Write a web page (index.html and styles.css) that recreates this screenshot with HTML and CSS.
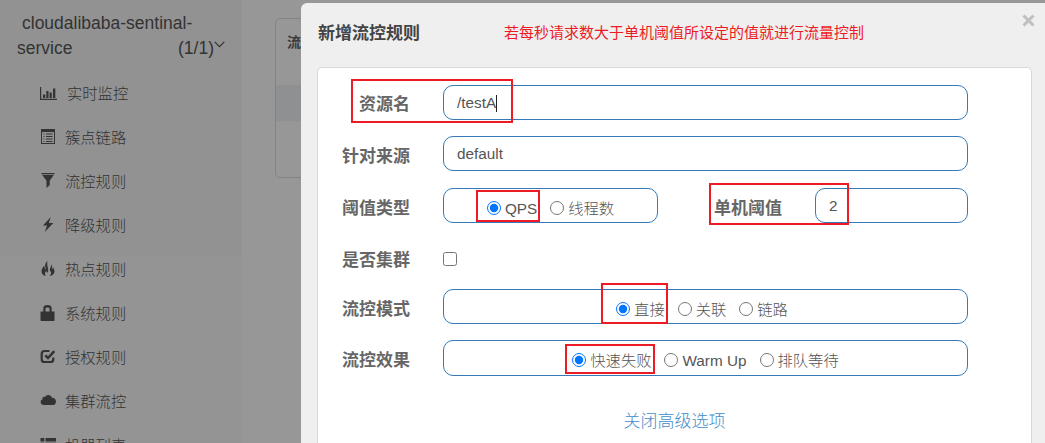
FILE: index.html
```html
<!DOCTYPE html>
<html lang="zh-CN">
<head>
<meta charset="utf-8">
<title>新增流控规则</title>
<link rel="stylesheet" href="styles.css">
</head>
<body>
<div class="page">
  <nav class="sidebar">
    <div class="app">
      <div class="app-name">cloudalibaba-sentinal-</div>
      <div class="app-row"><span>service</span><span class="count">(1/1)<svg class="chevron" width="11" height="7" viewBox="0 0 11 7"><path d="M.7.8 5.5 5.6 10.3.8" fill="none" stroke="currentColor" stroke-width="1.2"/></svg></span></div>
    </div>
    <ul class="menu">
      <li class="wide"><svg viewBox="0 0 18 16"><path d="M0 2h1.200v11.800H17V15H0zM3 9.500h2.200V13H3zM6.300 6h2.200v7H6.300zM9.600 7.500h2.200V13H9.600zM13 3.500h2.300V13H13z"/></svg><span>实时监控</span></li>
      <li><svg viewBox="0 0 16 16"><path fill-rule="evenodd" d="M1 0h14v15H1zM2 3v11h12V3zM3.500 4.500h1v1h-1zM6 4.500h6.500v1H6zM3.500 7h1v1h-1zM6 7h6.500v1H6zM3.500 9.500h1v1h-1zM6 9.500h6.500v1H6zM3.500 12h1v1h-1zM6 12h6.500v1H6z"/></svg><span>簇点链路</span></li>
      <li><svg viewBox="0 0 16 16"><path d="M1.500 0h13v1.300h-13zM2.200 2h11.600L9.700 7.800V12L6.500 15V7.800z"/></svg><span>流控规则</span></li>
      <li><svg viewBox="0 0 16 16"><path d="M10.800 0 3 8.500h4L4.800 15 13.300 6H8.800z"/></svg><span>降级规则</span></li>
      <li><svg viewBox="0 0 16 16"><path d="M7.500 0C3.500 3.500 5.800 6 5.700 8.500 4.600 8 4.800 6 4.200 4.700 2.600 6.500 1.500 8 1.500 10.500c0 2.400 1.800 4 4.300 4.500-1.300-2.200-.9-3.700.5-5.200C6.300 12 8 12.200 8.200 10 8.500 7.500 6.500 4 7.500 0zM11.500 3c.4 2.300-2 3.600-1.600 6.200.1 1 1.100 1.200 1.200 2.300.1 1-.4 2.300-1.500 3.500 2.800-.3 5-2.300 4.800-5-.1-1.600-.8-3-1.500-4-.1 1.200-.3 2-1 2.300C11.800 6.800 12.500 5 11.500 3z"/></svg><span>热点规则</span></li>
      <li><svg viewBox="0 0 16 16"><path fill-rule="evenodd" d="M.5 6.500h2.800V3.500C3.300 1 4.700 0 7.500 0s4.200 1 4.200 3.500v3h2.800V15c0 .6-.4 1-1 1h-12c-.6 0-1-.4-1-1zM5.500 6.500h4v-3Q9.500 2.500 7.500 2.500T5.500 3.500z"/></svg><span>系统规则</span></li>
      <li><svg viewBox="0 0 16 16"><path d="M9.500 2H4.500Q1.700 2 1.700 4.800v5.400Q1.700 13 4.500 13h6q2.800 0 2.800-2.800V8.500" fill="none" stroke="currentColor" stroke-width="2.200"/><path d="m5.300 6.300 2.700 2.700 6.300-6.800" fill="none" stroke="currentColor" stroke-width="2.500"/></svg><span>授权规则</span></li>
      <li><svg viewBox="0 0 16 16"><path d="M3.500 12a3 3 0 0 1-1-5.800C2.200 4.300 3.500 3.200 5 3.900 6 1.200 11 1 12 4.700c2-.2 4 1.300 4 3.700S14.500 12 12.500 12z"/></svg><span>集群流控</span></li>
      <li><svg viewBox="0 0 16 16"><path d="M.5 1h3.800v3.500H.5zM5.500 1H16v3.500H5.500zM.5 5.800h3.800v3.400H.5zM5.500 5.800H16v3.400H5.500zM.5 10.500h3.800V14H.5zM5.500 10.500H16V14H5.500z"/></svg><span>机器列表</span></li>
    </ul>
  </nav>
  <main class="content">
    <div class="card"><div class="card-head">流控</div><div class="card-stripe"></div></div>
  </main>
</div>

<section class="modal">
  <header class="modal-head">
    <h1 class="title">新增流控规则</h1>
    <p class="note">若每秒请求数大于单机阈值所设定的值就进行流量控制</p>
    <svg class="close" width="13" height="13" viewBox="0 0 13 13"><path d="m1.500 1.500 10 10m0-10-10 10" stroke="currentColor" stroke-width="3"/></svg>
  </header>
  <form class="panel">
    <div class="row"><label class="label">资源名</label><div class="field">/testA<i class="caret"></i></div></div>
    <div class="row"><label class="label">针对来源</label><div class="field">default</div></div>
    <div class="row tall">
      <label class="label">阈值类型</label>
      <div class="field choices short"><label><input type="radio" name="grade" checked>QPS</label><label><input type="radio" name="grade">线程数</label></div>
      <label class="label second">单机阈值</label><div class="field number">2</div>
    </div>
    <div class="row cluster"><label class="label">是否集群</label><input class="check" type="checkbox"></div>
    <div class="row mode"><label class="label">流控模式</label><div class="field choices"><label><input type="radio" name="mode" checked>直接</label><label><input type="radio" name="mode">关联</label><label><input type="radio" name="mode">链路</label></div></div>
    <div class="row effect"><label class="label">流控效果</label><div class="field choices"><label><input type="radio" name="effect" checked>快速失败</label><label><input type="radio" name="effect">Warm Up</label><label><input type="radio" name="effect">排队等待</label></div></div>
    <a class="advanced">关闭高级选项</a>
  </form>
</section>

<div class="mark mark-resource"></div>
<div class="mark mark-qps"></div>
<div class="mark mark-threshold"></div>
<div class="mark mark-mode"></div>
<div class="mark mark-effect"></div>
</body>
</html>
```
FILE: styles.css
```css
* { box-sizing: border-box; }
body {
  margin: 0;
  width: 1045px;
  height: 443px;
  overflow: hidden;
  position: relative;
  font-family: "Liberation Sans", "Noto Sans CJK SC", sans-serif;
  font-size: 15.3px;
  font-weight: 300;
  line-height: 22px;
  color: #555;
}
.page { display: flex; height: 443px; background: #979797; }
.sidebar {
  width: 242px;
  height: 443px;
  overflow: hidden;
  background: linear-gradient(#929292 256px, #949494 256px);
  color: #333;
}
.app { padding: 11px 0 0 17px; font-size: 17.5px; line-height: 25px; }
.app-name { padding-left: 5px; }
.app-row { display: flex; justify-content: space-between; width: 208px; }
.count { display: flex; }
.chevron { margin-top: 5px; }
.menu { list-style: none; margin: 0; padding: 10px 0 0 40px; }
.menu li { display: flex; align-items: center; height: 44px; gap: 9px; }
.menu span { padding-top: 2px; }
.menu svg { width: 16px; height: 16px; fill: currentColor; }
.menu .wide svg { width: 18px; }
.content { flex: 1; padding: 18px 0 0 33px; }
.card { height: 160px; border: 1px solid #838383; border-radius: 5px; }
.card-head { height: 66px; padding: 12px 0 0 11px; font-size: 14px; font-weight: bold; color: #3b3b3b; }
.card-stripe { height: 36px; background: #8f9092; }

.modal {
  position: absolute;
  left: 301px;
  top: 3px;
  width: 744px;
  height: 440px;
  overflow: hidden;
  padding: 0 13px 0 16px;
  background: #efefef;
  border-radius: 6px 0 0 0;
}
.modal-head { display: flex; height: 64px; }
.title { margin: 20px 0 0; width: 186px; padding-left: 1px; font-size: 17px; line-height: 22px; color: #444; }
.note { flex: 1; margin: 19px 0 0; padding-left: 1px; font-size: 15px; font-weight: 400; color: #ed1c24; }
.close { flex: none; margin: 11px -3px 0 0; color: #bfbfbf; }
.panel {
  display: flex;
  flex-direction: column;
  width: 715px;
  height: 400px;
  padding: 17px 63px 0 24px;
  background: #fff;
  border: 1px solid #d8d8d8;
  border-radius: 5px;
}
.row { display: flex; height: 35px; margin-bottom: 16px; }
.row.tall { margin: 1px 0 0; }
.label { width: 101px; padding-top: 10px; font-size: 17px; font-weight: bold; color: #666; }
.row:first-child .label { padding-top: 9px; padding-left: 17px; }
.field {
  display: flex;
  align-items: center;
  flex: 1;
  height: 35px;
  padding: 1px 13px 0;
  border: 1px solid #337ab7;
  border-radius: 10px;
  color: #555;
}
.caret { width: 1px; height: 17px; background: #222; }
.short { flex: none; width: 215px; }
.second { margin-left: 56px; width: 101px; }
.choices { justify-content: center; gap: 13px; padding-top: 6px; }
.choices label { display: flex; align-items: center; white-space: nowrap; }
.choices input { width: 14px; height: 14px; margin: 0 4px 2px 0; }
.cluster { margin: 20px 0 0; height: 30px; }
.cluster .label { padding-top: 7px; }
.check { width: 14px; height: 14px; margin: 9px 0 0; }
.mode { margin: 16px 0 0; }
.mode .field { padding-right: 20px; }
.effect { margin: 16px 0 0; }
.effect .field { height: 36px; }
.advanced { margin-top: 36px; align-self: center; padding-left: 39px; font-size: 17px; color: #428bca; }

.mark { position: absolute; border: 2px solid #ed1c24; }
.mark-resource { left: 351px; top: 79px; width: 162px; height: 44px; }
.mark-qps { left: 476px; top: 190px; width: 64px; height: 32px; }
.mark-threshold { left: 709px; top: 183px; width: 140px; height: 42px; }
.mark-mode { left: 601px; top: 283px; width: 67px; height: 41px; }
.mark-effect { left: 565px; top: 344px; width: 90px; height: 30px; }
```
